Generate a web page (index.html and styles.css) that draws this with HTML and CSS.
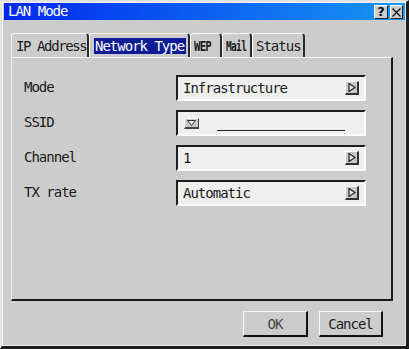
FILE: index.html
```html
<html>
	<head>
		<title>LAN Mode</title>
		<link rel="stylesheet" href="styles.css">
	</head>
	<body>
		<div class="window">
			<div class="titlebar">
				<span class="title">LAN Mode</span>
				<div class="title-buttons">
					<span class="title-btn help">?</span>
					<span class="title-btn close">
						<svg width="9" height="9" viewBox="0 0 9 9"><path d="M0.5 0.5 L8.5 8.5 M8.5 0.5 L0.5 8.5" stroke="#111" stroke-width="1.3"/></svg>
					</span>
				</div>
			</div>

			<div class="dialog-body">
				<div class="tabs">
					<div class="tab tab-ip"><span class="tight">IP Address</span></div>
					<div class="tab tab-net tab-selected"><span class="tab-label">Network Type</span></div>
					<div class="tab tab-wep"><span class="squeeze">WEP</span></div>
					<div class="tab tab-mail"><span class="squeeze">Mail</span></div>
					<div class="tab tab-status"><span>Status</span></div>
				</div>

				<div class="tab-panel">
					<div class="option-row">
						<div class="option-label">Mode</div>
						<div class="option-field">
							<span class="field-text">Infrastructure</span>
							<span class="arrow-btn">
								<svg width="8" height="9" viewBox="0 0 8 9"><path d="M1 0.5 L7 4.5 L1 8.5 Z" fill="#e6e6e6" stroke="#222" stroke-width="1.2"/></svg>
							</span>
						</div>
					</div>
					<div class="option-row">
						<div class="option-label">SSID</div>
						<div class="option-field">
							<span class="drop-btn">
								<svg width="9" height="6" viewBox="0 0 9 6"><path d="M0.5 0.5 L8.5 0.5 L4.5 5.5 Z" fill="#e6e6e6" stroke="#333" stroke-width="1"/></svg>
							</span>
							<span class="ssid-line"></span>
						</div>
					</div>
					<div class="option-row">
						<div class="option-label">Channel</div>
						<div class="option-field">
							<span class="field-text">1</span>
							<span class="arrow-btn">
								<svg width="8" height="9" viewBox="0 0 8 9"><path d="M1 0.5 L7 4.5 L1 8.5 Z" fill="#e6e6e6" stroke="#222" stroke-width="1.2"/></svg>
							</span>
						</div>
					</div>
					<div class="option-row">
						<div class="option-label">TX rate</div>
						<div class="option-field">
							<span class="field-text">Automatic</span>
							<span class="arrow-btn">
								<svg width="8" height="9" viewBox="0 0 8 9"><path d="M1 0.5 L7 4.5 L1 8.5 Z" fill="#e6e6e6" stroke="#222" stroke-width="1.2"/></svg>
							</span>
						</div>
					</div>
				</div>

				<div class="dialog-buttons">
					<button class="dialog-btn btn-ok">OK</button>
					<button class="dialog-btn btn-cancel">Cancel</button>
				</div>
			</div>
		</div>
	</body>
</html>
```

FILE: styles.css
```css
body {
    margin: 0;
    background-color: #cccccc;
    font-family: "DejaVu Sans Mono", monospace;
    font-size: 14px;
    letter-spacing: -1px;
    color: #1a1a1a;
}

div.window {
    width: 409px;
    height: 349px;
    box-sizing: border-box;
    background-color: #cccccc;
    border-style: solid;
    border-width: 2px 3px 3px 2px;
    border-color: #e2e2e2 #1c1c1c #1c1c1c #e2e2e2;
    box-shadow: inset 1px 1px 0 #f4f4f4, inset -1px -1px 0 #e8e8e8;
    padding: 1px 1px 1px 2px;
}

div.titlebar {
    height: 17px;
    display: flex;
    align-items: center;
    justify-content: space-between;
    background: linear-gradient(to right, #0028ee, #1896f4);
    padding-right: 2px;
}

span.title {
    color: #ffffff;
    padding-left: 4px;
    line-height: 17px;
}

div.title-buttons {
    display: flex;
    gap: 2px;
    padding-top: 1px;
}

span.title-btn {
    width: 14px;
    height: 14px;
    box-sizing: border-box;
    display: flex;
    align-items: center;
    justify-content: center;
    background-color: #cccccc;
    border-style: solid;
    border-width: 1px;
    border-color: #ffffff #222222 #222222 #ffffff;
    font-family: "DejaVu Sans", sans-serif;
    font-weight: bold;
    font-size: 13px;
    letter-spacing: 0;
    color: #111111;
    line-height: 12px;
}

span.title-btn.close {
    width: 13px;
}

div.dialog-body {
    padding: 13px 0 0 7px;
}

div.tabs {
    display: flex;
    height: 24px;
}

div.tab {
    box-sizing: border-box;
    height: 24px;
    display: flex;
    align-items: center;
    padding-left: 4px;
    padding-top: 1px;
    border-style: solid;
    border-width: 1px 2px 0 1px;
    border-color: #f6f6f6 #2a2a2a #cccccc #f6f6f6;
    border-radius: 3px 4px 0 0;
    white-space: nowrap;
    overflow: hidden;
}

div.tab-ip { width: 78px; }
div.tab-net { width: 101px; }
div.tab-wep { width: 32px; padding-left: 3px; }
div.tab-mail { width: 30px; padding-left: 3px; }
div.tab-status { width: 53px; padding-left: 3px; }

span.tight {
    letter-spacing: -1.4px;
}

span.tab-label {
    background-color: #0c1c96;
    color: #ffffff;
    line-height: 16px;
    padding: 0 2px 0 1px;
}

span.squeeze {
    display: inline-block;
    transform: scaleX(0.76);
    transform-origin: left center;
    font-weight: bold;
}

div.tab-mail span.squeeze {
    transform: scaleX(0.68);
}

div.tab-panel {
    width: 382px;
    height: 244px;
    box-sizing: border-box;
    border-style: solid;
    border-width: 1px 2px 2px 1px;
    border-color: #f6f6f6 #1a1a1a #1a1a1a #f6f6f6;
    padding: 17px 0 0 12px;
    display: flex;
    flex-direction: column;
    gap: 9px;
}

div.option-row {
    display: flex;
    align-items: center;
    height: 26px;
}

div.option-label {
    width: 152px;
    padding-bottom: 3px;
}

div.option-field {
    width: 190px;
    height: 26px;
    box-sizing: border-box;
    display: flex;
    align-items: center;
    background-color: #efefef;
    border-style: solid;
    border-width: 2px;
    border-color: #1e1e1e #fbfbfb #fbfbfb #1e1e1e;
    padding: 0 5px;
}

span.field-text {
    flex: 1;
}

span.arrow-btn {
    width: 14px;
    height: 14px;
    box-sizing: border-box;
    display: flex;
    align-items: center;
    justify-content: center;
    background-color: #c8c8c8;
    border-style: solid;
    border-width: 1px 2px 2px 1px;
    border-color: #ffffff #333333 #333333 #ffffff;
}

span.drop-btn {
    width: 15px;
    height: 11px;
    box-sizing: border-box;
    margin-left: 1px;
    display: flex;
    align-items: center;
    justify-content: center;
    background-color: #c8c8c8;
    border-style: solid;
    border-width: 1px 1px 2px 1px;
    border-color: #ffffff #444444 #444444 #ffffff;
}

span.ssid-line {
    width: 128px;
    height: 1px;
    margin-left: 18px;
    margin-top: 14px;
    background-color: #222222;
}

div.dialog-buttons {
    width: 372px;
    margin-top: 10px;
    display: flex;
    justify-content: flex-end;
    gap: 11px;
}

button.dialog-btn {
    height: 26px;
    box-sizing: border-box;
    background-color: #cccccc;
    border-style: solid;
    border-width: 1px 2px 2px 1px;
    border-color: #f8f8f8 #111111 #111111 #f8f8f8;
    font-family: "DejaVu Sans Mono", monospace;
    font-size: 14px;
    letter-spacing: -1px;
    color: #1a1a1a;
    padding: 0;
}

button.btn-ok { width: 65px; color: #444444; }
button.btn-cancel { width: 64px; }
```
